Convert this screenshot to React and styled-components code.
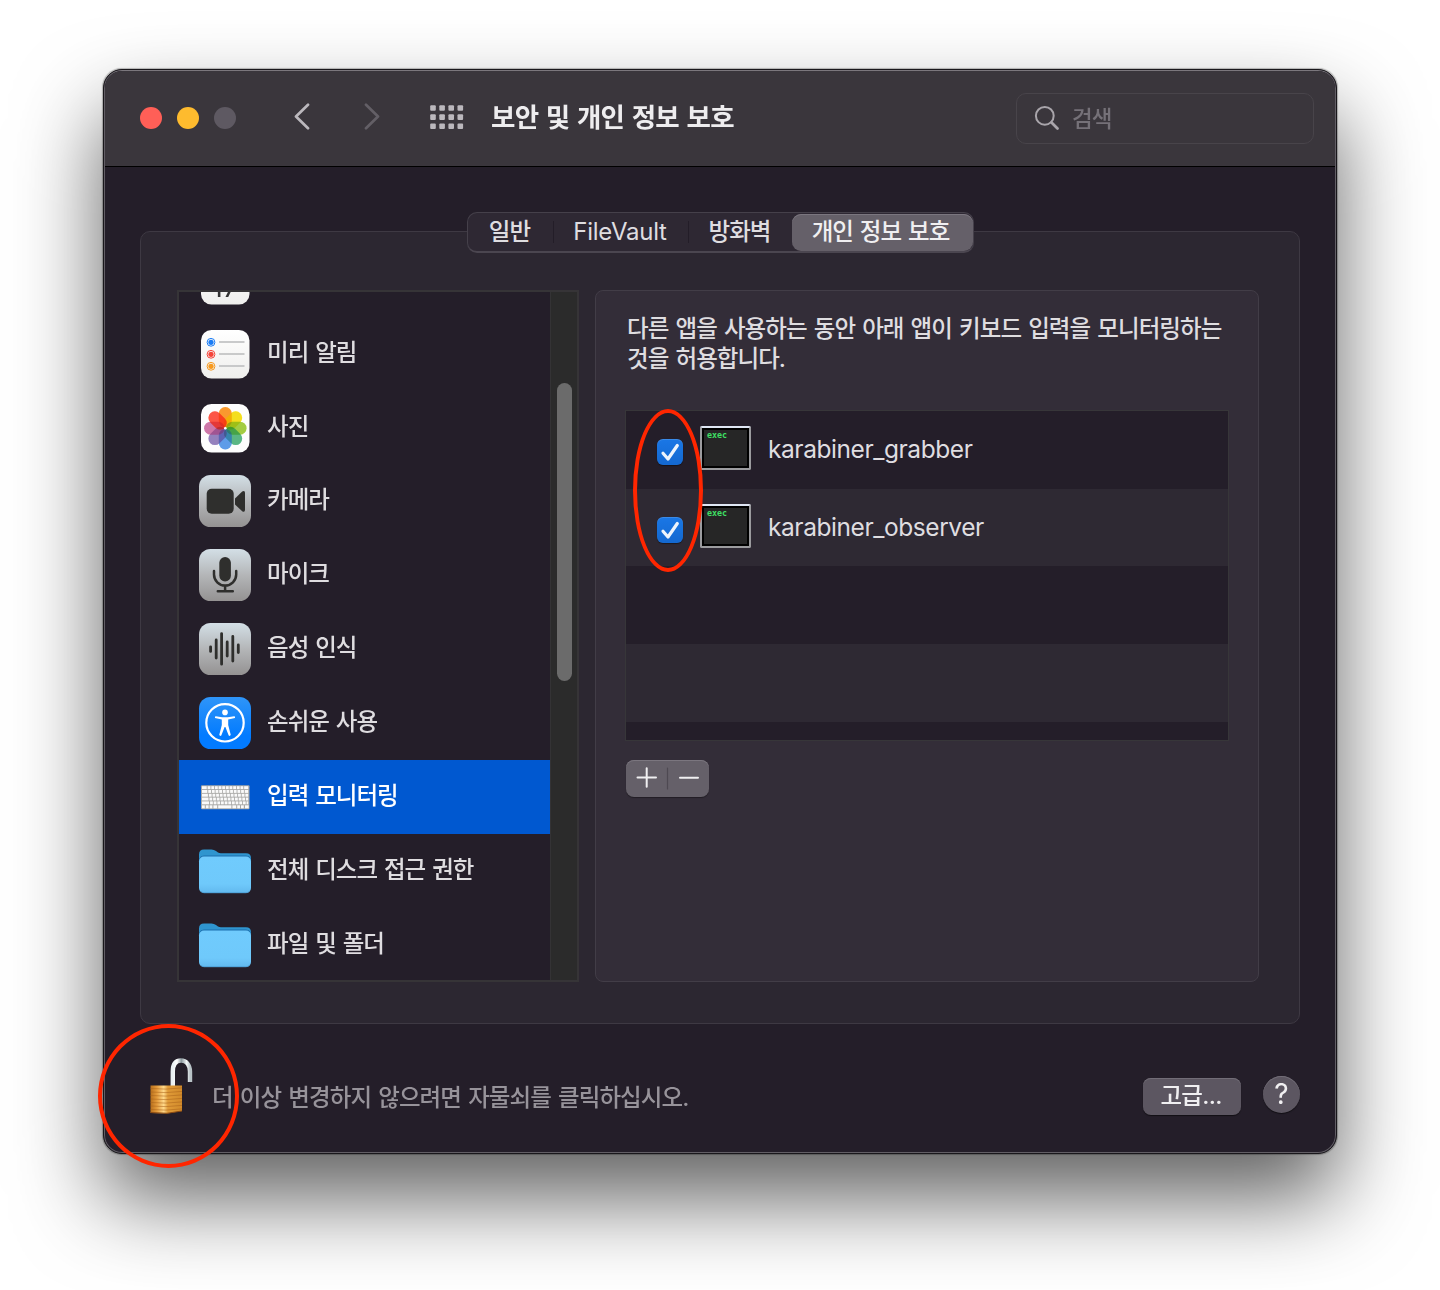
import React from "react";
import styled, { createGlobalStyle, css } from "styled-components";

const GlobalStyle = createGlobalStyle`
  *, *::before, *::after { box-sizing: border-box; }
  body {
    margin: 0;
    background: #fff;
    font-family: Inter, "Noto Sans CJK KR", sans-serif;
  }
`;

const hangul = css`
  font-size: 23.5px;
  font-weight: 500;
  letter-spacing: -0.98px;
  word-spacing: 1.6px;
  white-space: nowrap;
`;

const Desktop = styled.div`
  position: relative;
  width: 1440px;
  height: 1290px;
  padding: 69px 103px 0;
  overflow: hidden;
  background: #fff;
`;

const Window = styled.main`
  width: 1234px;
  height: 1085px;
  display: flex;
  flex-direction: column;
  border: 1px solid #19171b;
  border-radius: 19px;
  overflow: hidden;
  background: #241e29;
  color: #dfdde0;
  box-shadow: 0 0 1px 0.5px rgba(0, 0, 0, 0.25), 0 45px 86px rgba(0, 0, 0, 0.62);
`;

const Frame = styled.div`
  flex: 1;
  display: flex;
  flex-direction: column;
  border: 1px solid #625e65;
  border-top-color: #7b777d;
  border-radius: 18px;
  overflow: hidden;
`;

const TitleBar = styled.header`
  height: 96px;
  flex: none;
  display: flex;
  align-items: center;
  padding: 0 21px 1px 35px;
  background: #3a363c;
  border-bottom: 1px solid #000;
`;

const Lights = styled.div`
  display: flex;
  gap: 15px;
  margin: 0 57px 0 0;
`;

const Light = styled.span`
  width: 22px;
  height: 22px;
  border-radius: 50%;
  background: ${(p) => p.$color};
`;

const NavButton = styled.span`
  display: flex;
  margin-right: ${(p) => p.$gap}px;
  padding-bottom: 2px;
  svg { display: block; }
`;

const WindowTitle = styled.h1`
  flex: 1;
  margin: 0;
  padding-bottom: 6px;
  font-size: 26.5px;
  font-weight: 700;
  letter-spacing: -0.75px;
  word-spacing: 2px;
  color: #eeedef;
  white-space: nowrap;
`;

const Search = styled.div`
  width: 298px;
  height: 51px;
  display: flex;
  align-items: center;
  gap: 12px;
  padding-left: 17px;
  border: 1.5px solid #48444a;
  border-radius: 10px;
  color: #757178;
  ${hangul}
  font-size: 22.5px;
  svg { display: block; }
`;

const SearchHint = styled.span`
  padding-bottom: 2px;
`;

const Body = styled.div`
  flex: 1;
  display: flex;
  flex-direction: column;
  align-items: center;
  padding: 45px 35px 0;
`;

const Tabs = styled.nav`
  height: 41px;
  display: flex;
  align-items: center;
  margin-left: 1px;
  border: 1px solid #45404a;
  border-bottom: 2px solid #4b4650;
  border-radius: 10px;
  background: #2e2833;
  z-index: 1;
`;

const Tab = styled.span`
  width: ${(p) => p.$width}px;
  height: 37px;
  display: flex;
  justify-content: center;
  align-items: center;
  padding: 0 2px 5px 0;
  border-radius: 9px;
  ${hangul}
  ${(p) => p.$latin && "letter-spacing: -0.25px; font-size: 24px; font-weight: 400; padding-bottom: 2px;"}
  ${(p) => p.$active && "background: #656069; box-shadow: inset 0 1px #7b767f; color: #f0eff1; padding-right: 4px;"}
`;

const TabRule = styled.i`
  width: 1px;
  height: 22px;
  background: #231d28;
`;

const Group = styled.section`
  width: 1160px;
  height: 793px;
  margin-top: -22px;
  display: flex;
  align-items: flex-start;
  gap: 16px;
  padding: 58px 40px 0 36px;
  border: 1.5px solid #3e3943;
  border-radius: 10px;
  background: #2c2731;
`;

const ListBox = styled.div`
  width: 402px;
  height: 692px;
  flex: none;
  display: flex;
  border: 2px solid #363437;
  overflow: hidden;
  background: #241e29;
`;

const List = styled.ul`
  flex: 1;
  margin: -49px 0 0;
  padding: 0;
  list-style: none;
`;

const Item = styled.li`
  height: 73.85px;
  display: flex;
  align-items: center;
  padding-left: 18px;
  background: ${(p) => (p.$selected ? "#0058d0" : "transparent")};
  color: ${(p) => (p.$selected ? "#fff" : "#dfdde0")};
`;

const ItemIcon = styled.span`
  width: 56px;
  height: 56px;
  margin-right: 14px;
  display: flex;
  svg { display: block; }
`;

const ItemLabel = styled.span`
  padding-bottom: 6px;
  ${hangul}
`;

const Track = styled.div`
  width: 27px;
  padding: 91px 0 0 6px;
  border-left: 1px solid #343335;
  background: #2b2b2b;
`;

const Thumb = styled.div`
  width: 15px;
  height: 298px;
  border-radius: 8px;
  background: #6b6b6b;
`;

const Panel = styled.section`
  width: 664px;
  height: 692px;
  display: flex;
  flex-direction: column;
  align-items: flex-start;
  padding: 23px 29px 0;
  border: 1.5px solid #423d47;
  border-radius: 8px;
  background: #332d38;
`;

const Description = styled.p`
  margin: 0 0 37px 2px;
  line-height: 29.6px;
  ${hangul}
  letter-spacing: -0.95px;
  word-spacing: 1.8px;
`;

const Table = styled.div`
  width: 604px;
  height: 331px;
  display: flex;
  flex-direction: column;
  border: 1.5px solid #373639;
  overflow: hidden;
`;

const TableRow = styled.div`
  height: 77.6px;
  flex: none;
  display: flex;
  align-items: center;
  padding-left: 31px;
  background: ${(p) => (p.$alt ? "#2e2933" : "#241e29")};
`;

const CheckBox = styled.span`
  width: 26px;
  height: 26px;
  margin: 4px 17px 0 0;
  border-radius: 6px;
  background: linear-gradient(#1a77e6, #1468d0);
  box-shadow: inset 0 1px rgba(255, 255, 255, 0.14), 0 1px 1px rgba(0, 0, 0, 0.4);
  svg { display: block; }
`;

const ExecIcon = styled.span`
  width: 51px;
  height: 44px;
  margin: 0 17px 4px 0;
  padding: 0 0 0 5px;
  border: 2px solid #9b9b9e;
  border-top-color: #dfe6f4;
  border-radius: 2px;
  background: #262626;
  box-shadow: inset 0 0 0 2px #000;
  color: #3fe065;
  font: 700 8.3px/15px "DejaVu Sans Mono", monospace;
`;

const AppName = styled.span`
  font-size: 24.5px;
  letter-spacing: -0.43px;
  padding-bottom: 1px;
  white-space: nowrap;
`;

const Stepper = styled.div`
  width: 83px;
  height: 37px;
  margin: 19px 0 0 1px;
  border-radius: 8px;
  background: #656069;
  box-shadow: inset 0 1px #7b767f, 0 1px 1px rgba(0, 0, 0, 0.35);
  svg { display: block; }
`;

const Footer = styled.footer`
  width: 100%;
  height: 128px;
  display: flex;
  align-items: center;
`;

const LockIcon = styled.span`
  width: 60px;
  height: 64px;
  margin: 0 12px 2px 0;
  svg { display: block; }
`;

const Hint = styled.span`
  flex: 1;
  margin-top: 15px;
  color: #97939a;
  ${hangul}
  letter-spacing: -0.93px;
  word-spacing: 1.8px;
`;

const Button = styled.span`
  width: 98px;
  height: 37px;
  margin: 16px 22px 0 0;
  display: flex;
  align-items: center;
  justify-content: center;
  padding: 0 2px 5px 0;
  border-radius: 8px;
  background: #5c5661;
  box-shadow: inset 0 1px #726d77, 0 1px 1px rgba(0, 0, 0, 0.5);
  color: #f0eff1;
  ${hangul}
  letter-spacing: -0.7px;
`;

const Help = styled(Button)`
  width: 37px;
  margin: 12px 0 0;
  padding: 0;
  border-radius: 50%;
  font-size: 28px;
  font-weight: 400;
  letter-spacing: 0;
`;

const Mark = styled.span`
  position: absolute;
  left: ${(p) => p.$x}px;
  top: ${(p) => p.$y}px;
  width: ${(p) => p.$w}px;
  height: ${(p) => p.$h}px;
  border: 4.5px solid #ff2600;
  border-radius: 50%;
  z-index: 2;
`;

const Svg = (p) => <svg width="56" height="56" viewBox="0 0 56 56" fill="none" {...p} />;

const WhiteTile = () => (
  <>
    <defs>
      <linearGradient id="white" x1="0" y1="0" x2="0" y2="1">
        <stop stopColor="#fff" />
        <stop offset="1" stopColor="#efefed" />
      </linearGradient>
    </defs>
    <rect x="4" y="4" width="48.5" height="48.5" rx="10.5" fill="url(#white)" />
  </>
);

const GrayTile = () => (
  <>
    <defs>
      <linearGradient id="gray" x1="0" y1="0" x2="0" y2="1">
        <stop stopColor="#d3dfe6" />
        <stop offset="0.5" stopColor="#b4b6b8" />
        <stop offset="1" stopColor="#949292" />
      </linearGradient>
    </defs>
    <rect x="2" y="2" width="52" height="52" rx="11.5" fill="url(#gray)" />
  </>
);

const CalendarIcon = () => (
  <Svg>
    <WhiteTile />
    <text x="28" y="45" textAnchor="middle" fontSize="28" fontFamily="Inter" fill="#333">17</text>
  </Svg>
);

const RemindersIcon = () => (
  <Svg>
    <WhiteTile />
    {["#1a7cf5", "#f5443a", "#f79a1f"].map((c, i) => (
      <g key={c}>
        <circle cx="14" cy={16.3 + i * 12} r="3.9" stroke={c} strokeWidth="1" />
        <circle cx="14" cy={16.3 + i * 12} r="2.6" fill={c} />
        <path d={`M22 ${16 + i * 12}H47.5`} stroke="#bdbfc0" strokeWidth="1.6" />
      </g>
    ))}
  </Svg>
);

const petals = ["#fba21c", "#f6e300", "#acd33a", "#5abf8c", "#5fa5ec", "#9c88c6", "#d57db2", "#fd5540"];

const Petal = ({ color, turn, ...rest }) => (
  <rect x="21.8" y="7" width="13" height="20.5" rx="6.5" fill={color} transform={`rotate(${turn} 28.3 28.2)`} {...rest} />
);

const PhotosIcon = () => (
  <Svg>
    <rect x="4" y="4" width="48.5" height="48.5" rx="10.5" fill="#fdfdfd" />
    {petals.map((c, i) => (
      <Petal key={c} color={c} turn={i * 45} opacity="0.8" />
    ))}
    {petals.map((c, i) => (
      <Petal key={c} color={c} turn={i * 45} opacity="0.42" style={{ mixBlendMode: "multiply" }} />
    ))}
    <circle cx="28.300" cy="28.200" r="1.300" fill="#fff" />
  </Svg>
);

const CameraIcon = () => (
  <Svg>
    <GrayTile />
    <rect x="9.7" y="15.8" width="27" height="25" rx="5" fill="#2f2f2d" />
    <path d="M38 25.5 45.2 18.4Q48 17 48 19.8V36.5Q48 40 45.2 38.3L38 31.5Z" fill="#2f2f2d" />
  </Svg>
);

const MicIcon = () => (
  <Svg>
    <GrayTile />
    <rect x="22.3" y="10" width="11.6" height="24.5" rx="5.8" fill="#2f2f2d" />
    <path d="M17 24v3.5a11.1 11.1 0 0 0 22.2 0V24M28.1 39v5M20.8 44.3h15" stroke="#2f2f2d" strokeWidth="2.5" strokeLinecap="round" />
  </Svg>
);

const SpeechIcon = () => (
  <Svg>
    <GrayTile />
    <path d="M13.6 25.8v4.6M19.2 19v18M24.6 12.6v30.6M30.2 21v14M35.8 15.5v24.5M41.3 24v7.6" stroke="#2f2f2d" strokeWidth="2.8" strokeLinecap="round" />
  </Svg>
);

const AccessIcon = () => (
  <Svg>
    <defs>
      <linearGradient id="blue" x1="0" y1="0" x2="0" y2="1">
        <stop stopColor="#2f95f8" />
        <stop offset="0.75" stopColor="#027bff" />
      </linearGradient>
    </defs>
    <rect x="2" y="2" width="52" height="52" rx="11.5" fill="url(#blue)" />
    <circle cx="28" cy="27.8" r="18.7" stroke="#fff" strokeWidth="2.2" />
    <circle cx="28" cy="17.4" r="2.8" fill="#fff" />
    <path d="M18.8 21.2 25.2 22.2H30.8L37.2 21.2Q38.5 21.4 38 23L31.2 24.6V30L33.7 39.8Q33.2 41.6 31.7 40.5L28.4 32H27.6L24.3 40.5Q22.8 41.6 22.3 39.8L24.8 30V24.6L18 23Q17.5 21.4 18.8 21.2Z" fill="#fff" />
  </Svg>
);

const KeyboardIcon = () => (
  <Svg>
    <rect x="4" y="16.3" width="48.5" height="24" rx="1" fill="#a9a9a7" />
    {[0, 1, 2, 3, 4].map((r) => (
      <g key={r} fill="#fafafa">
        {Array.from({ length: 12 }, (_, k) => (
          <rect
            key={k}
            x={k === 0 ? 5 : 7 + r * 0.6 + k * 3.65}
            y={17.2 + r * 3.8}
            width={k === 0 ? 4.7 + r * 0.6 : k === 11 ? 4.1 - r * 0.6 : 2.8}
            height="2.9"
          />
        ))}
      </g>
    ))}
    {[[5, 2.8], [8.8, 2.8], [12.6, 2.8], [16.4, 3.8], [21.2, 13.2], [35.4, 3.8], [40.2, 2.8], [44, 2.8], [48, 3.7]].map(([x, w]) => (
      <rect key={x} x={x} y="36.3" width={w} height="3" fill="#fafafa" />
    ))}
  </Svg>
);

const FolderIcon = () => (
  <Svg>
    <defs>
      <linearGradient id="folder" x1="0" y1="0" x2="0" y2="1">
        <stop stopColor="#70cbfd" />
        <stop offset="0.75" stopColor="#6fc9fb" />
        <stop offset="1" stopColor="#62b9ee" />
      </linearGradient>
    </defs>
    <path d="M2 18V11.500q0-5 5-5h7.500q2.500 0 4.500 1.600l2 1.400q1.200.8 3 .8H49q5 0 5 5V24H2Z" fill="#2f95cf" />
    <path d="M2 24v-5.500q0-6 5-6h42q5 0 5 6v5.500Z" fill="#1c6fae" />
    <rect x="2" y="13.500" width="52" height="36.500" rx="5" fill="url(#folder)" />
    <path d="M4 48.500Q5.500 49.700 7 49.700H49Q51 49.700 52.500 48.300" stroke="#4fa2d8" />
  </Svg>
);

const items = [
  { label: "", icon: <CalendarIcon /> },
  { label: "미리 알림", icon: <RemindersIcon /> },
  { label: "사진", icon: <PhotosIcon /> },
  { label: "카메라", icon: <CameraIcon /> },
  { label: "마이크", icon: <MicIcon /> },
  { label: "음성 인식", icon: <SpeechIcon /> },
  { label: "손쉬운 사용", icon: <AccessIcon /> },
  { label: "입력 모니터링", icon: <KeyboardIcon />, selected: true },
  { label: "전체 디스크 접근 권한", icon: <FolderIcon /> },
  { label: "파일 및 폴더", icon: <FolderIcon /> },
];

const rows = ["karabiner_grabber", "karabiner_observer", null, null, null];

const Padlock = () => (
  <svg width="60" height="64" viewBox="0 0 60 64" fill="none">
    <defs>
      <linearGradient id="brass">
        <stop stopColor="#b8701c" />
        <stop offset="0.2" stopColor="#e39a3a" />
        <stop offset="0.42" stopColor="#ffd98a" />
        <stop offset="0.55" stopColor="#e09b38" />
        <stop offset="1" stopColor="#d18a2a" />
      </linearGradient>
      <linearGradient id="steel">
        <stop stopColor="#e9f0f2" />
        <stop offset="0.25" stopColor="#ffffff" />
        <stop offset="0.5" stopColor="#8d9a9f" />
        <stop offset="0.8" stopColor="#f4f8f9" />
        <stop offset="1" stopColor="#b9c3c7" />
      </linearGradient>
    </defs>
    <path d="M32.800 32V16.500C32.800 8.500 36 5.500 41 5.500S49.800 9.500 50 16.500V27" stroke="url(#steel)" strokeWidth="4.400" />
    <path d="M10.500 30.500H42V56L27 58.500 10.500 58Z" fill="url(#brass)" />
    {[33.5, 37, 40.5, 44, 47.5, 51, 54.5].map((y) => (
      <path key={y} d={`M10.5 ${y}L26 ${y + 0.6}L42 ${y - 0.6}`} stroke="#a8601a" strokeWidth="0.8" opacity="0.65" />
    ))}
    <path d="M10.500 57.500 27 58.300 42 56" stroke="#8a4a12" />
  </svg>
);

export default function App() {
  return (
    <Desktop>
      <GlobalStyle />
      <Window>
        <Frame>
          <TitleBar>
            <Lights>
              <Light $color="#ff5f57" />
              <Light $color="#febb2e" />
              <Light $color="#5e5962" />
            </Lights>
            <NavButton $gap={53}>
              <svg width="18" height="28" viewBox="0 0 18 28" fill="none" stroke="#bbb8bd" strokeWidth="2.700" strokeLinecap="round" strokeLinejoin="round">
                <path d="M15 1.800 3 13.500 15 25.200" />
              </svg>
            </NavButton>
            <NavButton $gap={48}>
              <svg width="18" height="28" viewBox="0 0 18 28" fill="none" stroke="#635f66" strokeWidth="2.700" strokeLinecap="round" strokeLinejoin="round">
                <path d="M2 1.800 14 13.500 2 25.200" />
              </svg>
            </NavButton>
            <NavButton $gap={27}>
              <svg width="34" height="24" viewBox="0 0 34 24" fill="#bbb8bd">
                {[0, 1, 2].map((r) =>
                  [0, 1, 2, 3].map((c) => (
                    <rect key={`${r}${c}`} x={0.2 + c * 9.1} y={0.2 + r * 9.1} width="5.600" height="5.600" rx="1" />
                  ))
                )}
              </svg>
            </NavButton>
            <WindowTitle>보안 및 개인 정보 보호</WindowTitle>
            <Search>
              <svg width="26" height="26" viewBox="0 0 26 26" fill="none" stroke="#a9a5ab" strokeLinecap="round">
                <circle cx="10.800" cy="10.800" r="8.900" strokeWidth="2" />
                <path d="M17.500 17.500 23.500 23.500" strokeWidth="2.800" />
              </svg>
              <SearchHint>검색</SearchHint>
            </Search>
          </TitleBar>
          <Body>
            <Tabs>
              <Tab $width={85}>일반</Tab>
              <TabRule />
              <Tab $width={134} $latin>FileVault</Tab>
              <TabRule />
              <Tab $width={103}>방화벽</Tab>
              <Tab $width={181} $active>개인 정보 보호</Tab>
            </Tabs>
            <Group>
              <ListBox>
                <List>
                  {items.map((it, i) => (
                    <Item key={i} $selected={it.selected}>
                      <ItemIcon>{it.icon}</ItemIcon>
                      {it.label && <ItemLabel>{it.label}</ItemLabel>}
                    </Item>
                  ))}
                </List>
                <Track>
                  <Thumb />
                </Track>
              </ListBox>
              <Panel>
                <Description>
                  다른 앱을 사용하는 동안 아래 앱이 키보드 입력을 모니터링하는
                  <br />
                  것을 허용합니다.
                </Description>
                <Table>
                  {rows.map((name, i) => (
                    <TableRow key={i} $alt={i % 2 === 1}>
                      {name && (
                        <>
                          <CheckBox>
                            <svg width="26" height="26" viewBox="0 0 26 26" fill="none" stroke="#eef4fc" strokeWidth="3.200" strokeLinecap="round" strokeLinejoin="round">
                              <path d="M6 14.200 11 20 20.300 6.500" />
                            </svg>
                          </CheckBox>
                          <ExecIcon>exec</ExecIcon>
                          <AppName>{name}</AppName>
                        </>
                      )}
                    </TableRow>
                  ))}
                </Table>
                <Stepper>
                  <svg width="83" height="37" viewBox="0 0 83 37" stroke="#f0eff1" strokeWidth="2" strokeLinecap="round">
                    <path d="M11.500 17.500H30M20.700 8.300V26.700M54 17.800H72" />
                    <path d="M41.500 8V29" stroke="#4e4952" strokeWidth="1.200" />
                  </svg>
                </Stepper>
              </Panel>
            </Group>
            <Footer>
              <LockIcon>
                <Padlock />
              </LockIcon>
              <Hint>더 이상 변경하지 않으려면 자물쇠를 클릭하십시오.</Hint>
              <Button>고급...</Button>
              <Help>?</Help>
            </Footer>
          </Body>
        </Frame>
      </Window>
      <Mark $x={633} $y={409} $w={70} $h={163} />
      <Mark $x={98} $y={1024} $w={141} $h={144} />
    </Desktop>
  );
}
